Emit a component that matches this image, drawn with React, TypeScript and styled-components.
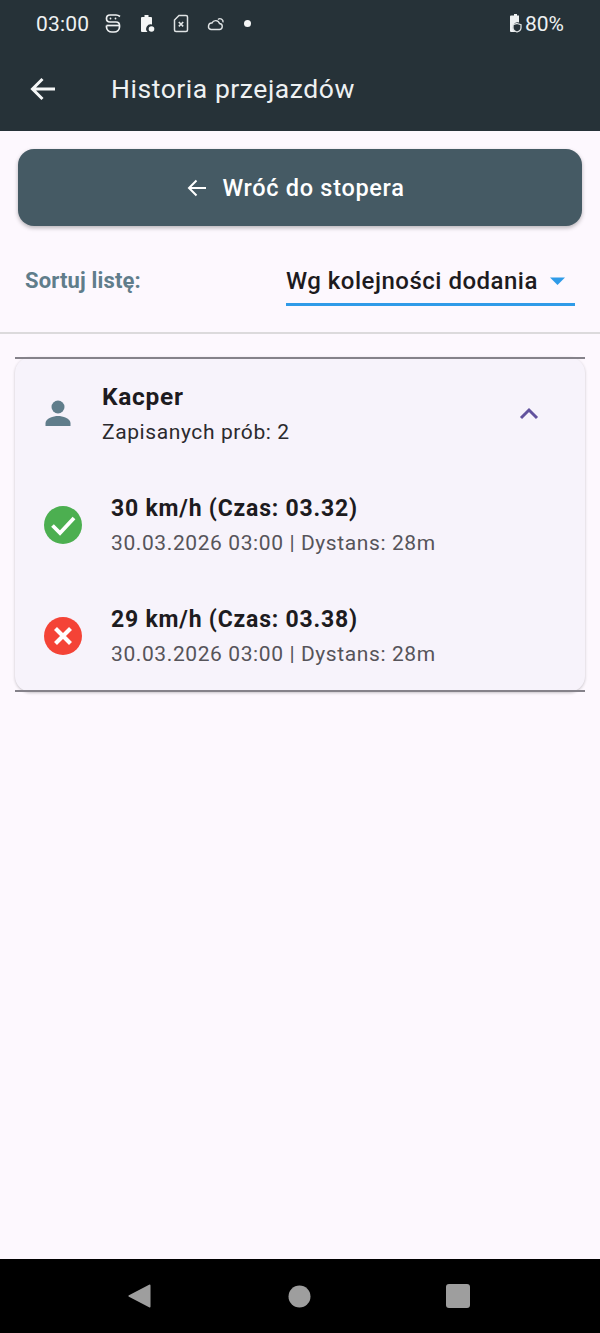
import React from "react";
import styled, { createGlobalStyle } from "styled-components";

const GlobalStyle = createGlobalStyle`
  html, body {
    margin: 0;
    padding: 0;
    background: #fdf8fe;
  }
  * {
    box-sizing: border-box;
  }
`;

const Screen = styled.div`
  width: 600px;
  height: 1333px;
  display: flex;
  flex-direction: column;
  overflow: hidden;
  background: #fdf8fe;
  font-family: Roboto, "Liberation Sans", sans-serif;
`;

const Header = styled.header`
  height: 131px;
  flex: none;
  background: #263238;
  color: #eef1f2;
`;

const StatusBar = styled.div`
  height: 47px;
  padding: 0 36px;
  display: flex;
  align-items: center;
  font-size: 21px;
`;

const Clock = styled.span`
  letter-spacing: 0.2px;
`;

const StatusIcons = styled.div`
  display: flex;
  align-items: center;
  gap: 18px;
  margin-left: 16px;
  flex: 1;
`;

const Battery = styled.div`
  display: flex;
  align-items: center;
  gap: 2px;
`;

const AppBar = styled.div`
  height: 84px;
  padding: 0 0 1px 30px;
  display: flex;
  align-items: center;
  gap: 55px;
`;

const Title = styled.h1`
  margin: 0;
  font-size: 26.5px;
  font-weight: 400;
  letter-spacing: 0.55px;
`;

const Main = styled.main`
  flex: 1;
  display: flex;
  flex-direction: column;
`;

const BackButton = styled.button`
  height: 77px;
  margin: 18px 18px 0;
  padding: 0 8px 0 0;
  border: none;
  border-radius: 16px;
  background: #455a64;
  color: #fff;
  font: 500 23.5px Roboto, "Liberation Sans", sans-serif;
  letter-spacing: 0.7px;
  display: flex;
  align-items: center;
  justify-content: center;
  gap: 14px;
  box-shadow: 0 2px 4px rgba(0, 0, 0, 0.28);
`;

const SortRow = styled.div`
  height: 108px;
  padding: 3px 25px 0;
  display: flex;
  align-items: center;
  justify-content: space-between;
  border-bottom: 2px solid #dcdadc;
`;

const SortLabel = styled.span`
  color: #607d8b;
  font-size: 22px;
  font-weight: 700;
  letter-spacing: 0.15px;
`;

const Dropdown = styled.div`
  width: 289px;
  height: 49px;
  margin-top: 2px;
  padding: 4px 0 2px;
  display: flex;
  align-items: center;
  justify-content: space-between;
  border-bottom: 3px solid #2f9be8;
  color: #1d1b20;
  font-size: 24px;
  font-weight: 500;
  letter-spacing: 0.5px;
`;

const Card = styled.section`
  position: relative;
  margin: 23px 15px 0;
  height: 335px;
  border-radius: 16px;
  background: #f7f3fb;
  box-shadow: 0 1px 3px rgba(0, 0, 0, 0.22);
  padding: 0 0 0 28px;
  &::before,
  &::after {
    content: "";
    position: absolute;
    left: 0;
    right: 0;
    height: 2px;
    background: #85828a;
  }
  &::before {
    top: 0;
  }
  &::after {
    bottom: 0;
  }
`;

const CardHead = styled.div`
  height: 112px;
  display: flex;
  align-items: center;
  padding-right: 46px;
`;

const Avatar = styled.div`
  width: 30px;
  display: flex;
  justify-content: center;
  margin-right: 29px;
`;

const HeadText = styled.div`
  flex: 1;
  display: flex;
  flex-direction: column;
  gap: 9px;
  margin-top: -1px;
`;

const Name = styled.div`
  color: #1d1b20;
  font-size: 24.5px;
  font-weight: 700;
  letter-spacing: 0.7px;
`;

const Tries = styled.div`
  color: #2b2a2e;
  font-size: 21px;
  letter-spacing: 0.6px;
`;

const Attempt = styled.div`
  height: 111px;
  display: flex;
  align-items: center;
`;

const AttemptIcon = styled.div`
  width: 40px;
  height: 40px;
  margin-right: 28px;
`;

const AttemptText = styled.div`
  display: flex;
  flex-direction: column;
  gap: 9px;
`;

const Speed = styled.div`
  color: #1d1b20;
  font-size: 23px;
  font-weight: 700;
  letter-spacing: 0.8px;
`;

const Meta = styled.div`
  color: #56545a;
  font-size: 21px;
  letter-spacing: 0.6px;
`;

const NavBar = styled.nav`
  height: 74px;
  flex: none;
  background: #000;
  display: flex;
  align-items: center;
  justify-content: space-between;
  padding: 0 130px 0 128px;
`;

const HomeDot = styled.svg`
  margin-left: 2px;
`;

const NotifyDot = styled.svg`
  margin-left: 1px;
`;

const ArrowEnd = styled.svg`
  margin-right: 9px;
`;

const attempts = [
  { ok: true, speed: "30 km/h (Czas: 03.32)" },
  { ok: false, speed: "29 km/h (Czas: 03.38)" },
];

const StatusIcon: React.FC<{ ok: boolean }> = ({ ok }) => (
  <svg width="40" height="40" viewBox="0 0 40 40">
    <circle cx="20" cy="20" r="19" fill={ok ? "#4caf50" : "#f44336"} />
    {ok ? (
      <path d="M9.500 20.500l7.500 7.500 14-15" fill="none" stroke="#fff" strokeWidth="3.800" />
    ) : (
      <path d="M12.500 12.500l15 15M27.500 12.500l-15 15" fill="none" stroke="#fff" strokeWidth="4.200" />
    )}
  </svg>
);

const App: React.FC = () => (
  <Screen>
    <GlobalStyle />
    <Header>
      <StatusBar>
        <Clock>03:00</Clock>
        <StatusIcons>
          <svg width="16" height="19" viewBox="0 0 16 19" fill="none" stroke="#eef1f2" strokeWidth="1.700">
            <path d="M15 2.500C13.800 1.500 12.500 1 11 1H5C2.800 1 1.500 2.500 1.500 4.500S2.800 8 5 8h6c2.200 0 3.500 1.500 3.500 3.500v1.500c0 3-2.500 5-5.500 5H7c-3 0-5.500-2-5.500-5v-1.500" />
            <path d="M1.500 11.500h13" />
            <circle cx="5.500" cy="4.500" r="0.900" fill="#eef1f2" stroke="none" />
            <circle cx="10.500" cy="4.500" r="0.900" fill="#eef1f2" stroke="none" />
          </svg>
          <svg width="16" height="19" viewBox="0 0 16 19" fill="#f4f6f6">
            <path d="M3 3h2.500V1h4v2H12a1 1 0 0 1 1 1v6.500a4.500 4.500 0 0 0-4.500 7.500H3a1 1 0 0 1-1-1V4a1 1 0 0 1 1-1z" />
            <circle cx="12.500" cy="15" r="2.800" />
          </svg>
          <svg width="16" height="19" viewBox="0 0 16 19" fill="none" stroke="#dfe3e4" strokeWidth="1.500">
            <path d="M6 1.500h7a1.500 1.500 0 0 1 1.500 1.500v13a1.500 1.500 0 0 1-1.500 1.500H3A1.500 1.500 0 0 1 1.500 16V6z" />
            <path d="M5.800 8l4.400 4.400M10.200 8l-4.400 4.400" strokeWidth="1.600" />
          </svg>
          <svg width="18" height="14" viewBox="0 0 18 14" fill="none" stroke="#dfe3e4" strokeWidth="1.400">
            <path d="M4 12.500h8a3 3 0 0 0 .5-6A4 4 0 0 0 5 6a3.300 3.300 0 0 0-1 6.500z" />
            <path d="M11 2.500a3 3 0 0 1 5 2.800" />
          </svg>
          <NotifyDot width="7" height="7" viewBox="0 0 7 7">
            <circle cx="3.500" cy="3.500" r="3.500" fill="#f4f6f6" />
          </NotifyDot>
        </StatusIcons>
        <Battery>
          <svg width="16" height="20" viewBox="0 0 15 20">
            <path d="M3.500 1.500h3V0h3v1.500h2v7a5 5 0 0 0-3 9.500h-5a1 1 0 0 1-1-1V2.500a1 1 0 0 1 1-1z" fill="#eef1f2" />
            <path d="M9.500 9.500l4 1.200v3c0 2-1.500 3.500-4 4.300-2.500-.8-4-2.300-4-4.300v-3z" fill="none" stroke="#dfe3e4" strokeWidth="1.300" />
          </svg>
          <span>80%</span>
        </Battery>
      </StatusBar>
      <AppBar>
        <svg width="26" height="24" viewBox="0 0 26 24" fill="none" stroke="#f5f7f7" strokeWidth="3">
          <path d="M25 12H3M12.500 2L2.500 12l10 10" />
        </svg>
        <Title>Historia przejazdów</Title>
      </AppBar>
    </Header>
    <Main>
      <BackButton>
        <svg width="21" height="18" viewBox="0 0 21 18" fill="none" stroke="#fff" strokeWidth="2">
          <path d="M19 9H2M9.500 1.500L2 9l7.500 7.500" />
        </svg>
        Wróć do stopera
      </BackButton>
      <SortRow>
        <SortLabel>Sortuj listę:</SortLabel>
        <Dropdown>
          <span>Wg kolejności dodania</span>
          <ArrowEnd width="17" height="10" viewBox="0 0 17 10">
            <path d="M1 1.500h15l-7.500 7.500z" fill="#2f9be8" />
          </ArrowEnd>
        </Dropdown>
      </SortRow>
      <Card>
        <CardHead>
          <Avatar>
            <svg width="28" height="26" viewBox="0 0 28 26" fill="#607d8b">
              <circle cx="14" cy="7" r="6.500" />
              <path d="M1.500 26v-3c0-4.500 8-7 12.500-7s12.500 2.500 12.500 7v3z" />
            </svg>
          </Avatar>
          <HeadText>
            <Name>Kacper</Name>
            <Tries>Zapisanych prób: 2</Tries>
          </HeadText>
          <svg width="20" height="13" viewBox="0 0 20 13" fill="none" stroke="#62529e" strokeWidth="3">
            <path d="M2 11l8-8 8 8" />
          </svg>
        </CardHead>
        {attempts.map((attempt) => (
          <Attempt key={attempt.speed}>
            <AttemptIcon>
              <StatusIcon ok={attempt.ok} />
            </AttemptIcon>
            <AttemptText>
              <Speed>{attempt.speed}</Speed>
              <Meta>30.03.2026 03:00 | Dystans: 28m</Meta>
            </AttemptText>
          </Attempt>
        ))}
      </Card>
    </Main>
    <NavBar>
      <svg width="23" height="26" viewBox="0 0 24 26" fill="#9e9e9e">
        <path d="M22 1.200a1 1 0 0 1 1.500.8v22a1 1 0 0 1-1.500.8L1.500 14a1 1 0 0 1 0-2z" />
      </svg>
      <HomeDot width="23" height="23" viewBox="0 0 23 23">
        <circle cx="11.500" cy="11.500" r="11" fill="#9e9e9e" />
      </HomeDot>
      <svg width="24" height="24" viewBox="0 0 24 24">
        <rect width="24" height="24" rx="3" fill="#9e9e9e" />
      </svg>
    </NavBar>
  </Screen>
);

export default App;
